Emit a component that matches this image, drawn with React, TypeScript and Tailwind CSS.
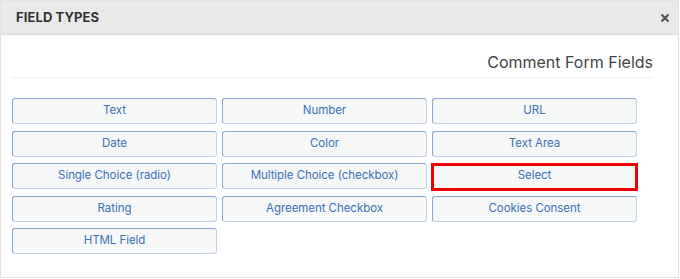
import React from "react";

const fields = [
  "Text",
  "Number",
  "URL",
  "Date",
  "Color",
  "Text Area",
  "Single Choice (radio)",
  "Multiple Choice (checkbox)",
  "Select",
  "Rating",
  "Agreement Checkbox",
  "Cookies Consent",
  "HTML Field",
];

export default function App() {
  return (
    <div
      className="w-[680px] h-[279px] bg-white overflow-hidden"
      style={{ fontFamily: "Inter, 'Liberation Sans', sans-serif" }}
    >
      <div className="w-[679px] h-[278px] border border-[#e2e2e2] flex flex-col">
        <div className="h-[34px] bg-[#e9e9e9] border-b border-[#dcdcdc] flex items-center justify-between pl-[15px] pr-[8px] shrink-0">
          <span className="text-[13px] font-bold text-[#333] tracking-[0.1px]">FIELD TYPES</span>
          <svg width="10" height="10" viewBox="0 0 10 10">
            <path d="M1.5 1.5 L8.5 8.5 M8.5 1.5 L1.5 8.5" stroke="#555" strokeWidth="2.2" strokeLinecap="butt" />
          </svg>
        </div>
        <div className="pl-[10px] pr-[25px]">
          <div className="h-[43px] border-b border-[#eeeeee] flex items-center justify-end">
            <span className="text-[16px] text-[#444] leading-none mt-[12px]">Comment Form Fields</span>
          </div>
          <div className="grid grid-cols-[205px_205px_205px] gap-x-[5px] gap-y-[6.5px] mt-[20px] pl-[1px]">
            {fields.map((f) => (
              <button
                key={f}
                className="relative h-[26px] bg-[#f6f7f7] rounded-[3px] border border-t-[#86a7d2] border-l-[#86a7d2] border-r-[#c3d2e6] border-b-[#c3d2e6] text-[11.5px] tracking-[-0.05px] text-[#3a72b5] flex items-center justify-center"
              >
                {f}
                {f === "Select" && (
                  <span className="absolute left-[-2px] top-[-1.5px] right-[-2px] bottom-[-3px] border-[3px] border-[#ee0000] pointer-events-none" />
                )}
              </button>
            ))}
          </div>
        </div>
      </div>
    </div>
  );
}
